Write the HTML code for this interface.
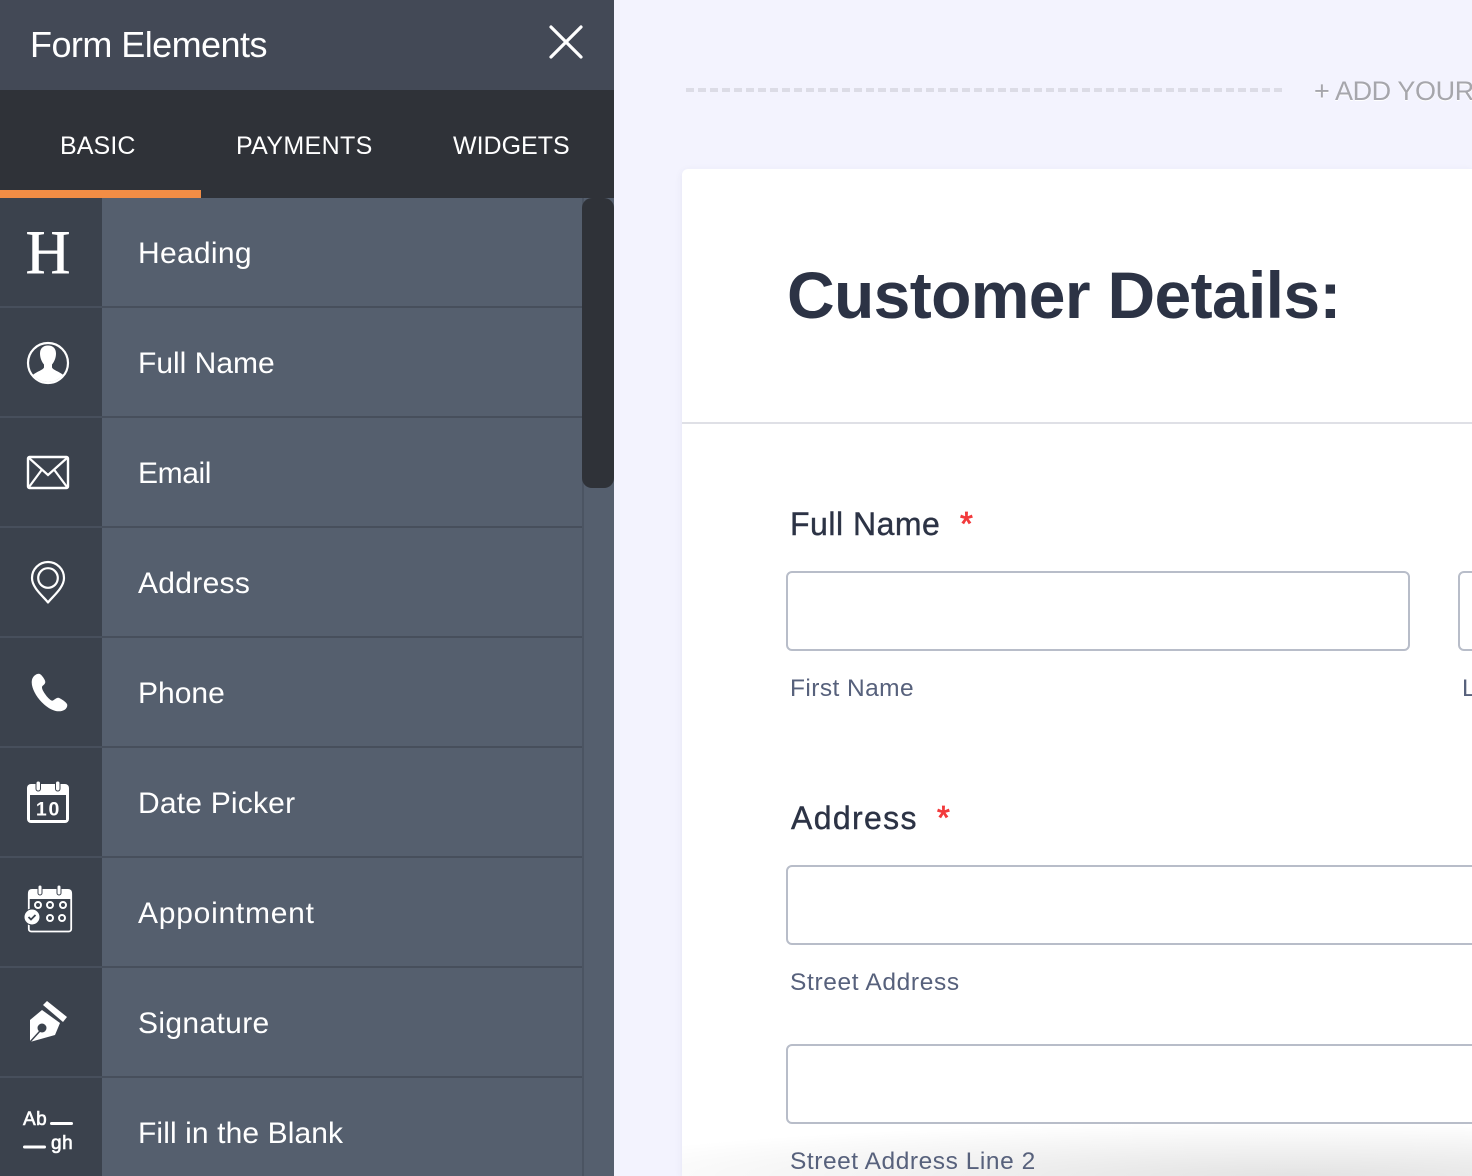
<!DOCTYPE html>
<html><head><meta charset="utf-8">
<style>
html,body{margin:0;padding:0;width:1472px;height:1176px;overflow:hidden;background:#f3f3fe;font-family:"Liberation Sans",sans-serif}
#root{position:relative;width:1472px;height:1176px;overflow:hidden;background:#f3f3fe}
.a{position:absolute;white-space:nowrap}
#side{position:absolute;left:0;top:0;width:614px;height:1176px;background:#555f6e;overflow:hidden}
.hd{left:0;top:0;width:614px;height:90px;background:#434956}
.tabs{left:0;top:90px;width:614px;height:108px;background:#2f3238}
.tab{color:#fff;font-size:25px;top:131px;line-height:30px}
.row{position:absolute;left:0;width:582px;height:110px}
.row .ic{position:absolute;left:0;top:0;width:102px;height:108px;background:#3b424d}
.row .ln{position:absolute;left:0;top:108px;width:582px;height:2px;background:#474f5c}
.row .t{position:absolute;left:138px;top:38px;color:#fff;font-size:30px;line-height:36px;white-space:nowrap}
.row svg{position:absolute;left:0;top:0}
#card{position:absolute;left:682px;top:169px;width:790px;height:1007px;background:#fff;border-radius:6px 0 0 0;box-shadow:0 2px 8px rgba(60,60,120,.08)}
.lab{color:#2c3345;font-size:32px;line-height:38px;-webkit-text-stroke:.4px #2c3345}
.sub{color:#57617c;font-size:24.5px;line-height:30px}
.inp{position:absolute;box-sizing:border-box;height:80px;border:2px solid #b8bdc9;border-radius:6px;background:#fff}
.star{color:#f23a3c;font-size:33px;line-height:38px;-webkit-text-stroke:.8px #f23a3c}
</style></head><body>
<div id="root">
<div id="side">
<div class="a hd"></div>
<div class="a" style="left:30px;top:23px;color:#fff;font-size:36px;line-height:44px;letter-spacing:-.55px">Form Elements</div>
<svg class="a" style="left:545px;top:21px" width="42" height="42" viewBox="0 0 42 42"><path d="M6 6 L36 36 M36 6 L6 36" stroke="#fff" stroke-width="3.2" stroke-linecap="round" fill="none"/></svg>
<div class="a tabs"></div>
<div class="a tab" style="left:60px;letter-spacing:.1px">BASIC</div>
<div class="a tab" style="left:236px;letter-spacing:.35px">PAYMENTS</div>
<div class="a tab" style="left:453px">WIDGETS</div>
<div class="a" style="left:0;top:190px;width:201px;height:8px;background:#f28d45"></div>

<div class="row" style="top:198px"><div class="ic"></div><div class="ln"></div><div class="t" style="letter-spacing:.3px">Heading</div>
<svg width="102" height="108"><text x="48" y="75" text-anchor="middle" font-family="Liberation Serif" font-size="62" fill="#fff" stroke="#fff" stroke-width=".6">H</text></svg></div>

<div class="row" style="top:308px"><div class="ic"></div><div class="ln"></div><div class="t">Full Name</div>
<svg width="102" height="108"><circle cx="48" cy="55" r="20" fill="none" stroke="#fff" stroke-width="2.2"/><path d="M48 37.500c-5 0-8 3-8 8 0 4 1.500 8 4 11v3c-1 2.500-7 4-11 7.200A19 19 0 0 0 63 66.700c-4-3.200-10-4.700-11-7.200v-3c2.500-3 4-7 4-11 0-5-3-8-8-8z" fill="#fff"/></svg></div>

<div class="row" style="top:418px"><div class="ic"></div><div class="ln"></div><div class="t" style="letter-spacing:-.4px">Email</div>
<svg width="102" height="108"><rect x="28" y="39" width="40" height="31" rx="1.500" fill="none" stroke="#fff" stroke-width="2.400"/><path d="M29 40 L48 57 L67 40 M29 69 L42 51.500 M67 69 L54 51.500" fill="none" stroke="#fff" stroke-width="2.200"/></svg></div>

<div class="row" style="top:528px"><div class="ic"></div><div class="ln"></div><div class="t" style="letter-spacing:.3px">Address</div>
<svg width="102" height="108"><path d="M48 74.500 C44 69 32 60 32 50 A16 16 0 0 1 64 50 C64 60 52 69 48 74.500Z" fill="none" stroke="#fff" stroke-width="2.200" stroke-linejoin="round"/><circle cx="48" cy="50" r="9.800" fill="none" stroke="#fff" stroke-width="2.200"/></svg></div>

<div class="row" style="top:638px"><div class="ic"></div><div class="ln"></div><div class="t">Phone</div>
<svg width="102" height="108"><path d="M39 36 C36 36 32 39 32 44 C32 50 36 58 42 64 C48 70 54 73 59 73 C63 73 67 71 67 67 C67 65 60 60 58 60 C56 60 54 63 52 63 C49 62 46 58 44 55 C42 52 41 50 42 48 C43 47 45 46 45 44 C45 42 41 36 39 36Z" fill="#fff" stroke="#fff" stroke-width=".6"/></svg></div>

<div class="row" style="top:748px"><div class="ic"></div><div class="ln"></div><div class="t" style="letter-spacing:.2px">Date Picker</div>
<svg width="102" height="108"><rect x="27" y="36" width="42" height="39" rx="4" fill="#fff"/><rect x="30" y="47" width="36" height="25" fill="#3b424d"/><rect x="36" y="33" width="4.500" height="10" rx="2.200" fill="#fff" stroke="#3b424d" stroke-width="1"/><rect x="55.500" y="33" width="4.500" height="10" rx="2.200" fill="#fff" stroke="#3b424d" stroke-width="1"/><text x="48.500" y="67.500" text-anchor="middle" font-family="Liberation Sans" font-weight="bold" font-size="19.500" letter-spacing="1.800" fill="#fff">10</text></svg></div>

<div class="row" style="top:858px"><div class="ic"></div><div class="ln"></div><div class="t" style="letter-spacing:.75px">Appointment</div>
<svg width="102" height="108"><rect x="28.800" y="33" width="42.400" height="40.500" rx="2.500" fill="none" stroke="#fff" stroke-width="1.800"/><path d="M32 31h36c2.500 0 4 1.500 4 4v6H28v-6c0-2.500 1.500-4 4-4z" fill="#fff"/><rect x="38" y="27" width="4" height="10" rx="2" fill="#fff" stroke="#3b424d"/><rect x="57" y="27" width="4" height="10" rx="2" fill="#fff" stroke="#3b424d"/><g fill="none" stroke="#fff" stroke-width="2"><circle cx="38" cy="47" r="3"/><circle cx="50" cy="47" r="3"/><circle cx="63" cy="47" r="3"/><circle cx="50" cy="60" r="3"/><circle cx="62" cy="60" r="3"/></g><circle cx="32" cy="59" r="8" fill="#fff" stroke="#3b424d" stroke-width="1"/><path d="M28.500 59l2.500 2.500 4.500-4.500" fill="none" stroke="#3b424d" stroke-width="1.800"/></svg></div>

<div class="row" style="top:968px"><div class="ic"></div><div class="ln"></div><div class="t" style="letter-spacing:.35px">Signature</div>
<svg width="102" height="108"><path d="M43 37 L47 33 L67 49 L63 54Z" fill="#fff"/><path d="M30 52 L42 42 L60 55 L55 67 L30 74 Z" fill="#fff"/><circle cx="42" cy="60" r="4.500" fill="#3b424d"/><path d="M29.500 74.500 L40 63" stroke="#3b424d" stroke-width="1.500"/></svg></div>

<div class="row" style="top:1078px"><div class="ic"></div><div class="t" style="letter-spacing:.1px">Fill in the Blank</div>
<svg width="102" height="108"><text x="23" y="47" font-family="Liberation Sans" font-size="19" letter-spacing=".5" fill="#fff" stroke="#fff" stroke-width=".6">Ab</text><rect x="50" y="44" width="23" height="3" rx="1.500" fill="#fff"/><rect x="23" y="67.500" width="23" height="3" rx="1.500" fill="#fff"/><text x="51" y="71" font-family="Liberation Sans" font-size="19" letter-spacing=".5" fill="#fff" stroke="#fff" stroke-width=".6">gh</text></svg></div>

<div class="a" style="left:582px;top:198px;width:2px;height:978px;background:#4b5462"></div>
<div class="a" style="left:582px;top:198px;width:32px;height:290px;background:#2f3238;border-radius:10px"></div>
</div>

<svg class="a" style="left:686px;top:86px" width="600" height="8"><line x1="0" y1="4" x2="596" y2="4" stroke="#dcdce6" stroke-width="4" stroke-dasharray="8 4"/></svg>
<div class="a" style="left:1314px;top:74px;color:#a6a6ac;font-size:27px;line-height:34px;letter-spacing:-.4px;text-shadow:0 1px 0 #fff">+ ADD YOUR LOGO</div>

<div id="card"></div>
<div class="a" style="left:682px;top:422px;width:790px;height:2px;background:#dfe0e6"></div>
<div class="a" style="left:787px;top:257px;color:#2c3345;font-size:66px;line-height:76px;font-weight:bold;letter-spacing:-.65px">Customer Details:</div>

<div class="a lab" style="left:790px;top:505px;letter-spacing:.5px">Full Name</div>
<div class="a star" style="left:960px;top:505px">*</div>
<div class="inp" style="left:786px;top:571px;width:624px"></div>
<div class="inp" style="left:1458px;top:571px;width:100px"></div>
<div class="a sub" style="left:790px;top:674px;letter-spacing:.42px">First Name</div>
<div class="a sub" style="left:1462px;top:674px">L</div>

<div class="a lab" style="left:791px;top:799px;letter-spacing:1.350px">Address</div>
<div class="a star" style="left:937px;top:799px">*</div>
<div class="inp" style="left:786px;top:865px;width:800px"></div>
<div class="a sub" style="left:790px;top:968px;letter-spacing:.65px">Street Address</div>
<div class="inp" style="left:786px;top:1044px;width:800px"></div>
<div class="a" style="left:682px;top:1124px;width:790px;height:52px;background:radial-gradient(ellipse 760px 54px at 78% 100%,rgba(0,0,0,.11),rgba(0,0,0,0) 100%)"></div>
<div class="a sub" style="left:790px;top:1147px;letter-spacing:.55px">Street Address Line 2</div>
</div>
</body></html>
